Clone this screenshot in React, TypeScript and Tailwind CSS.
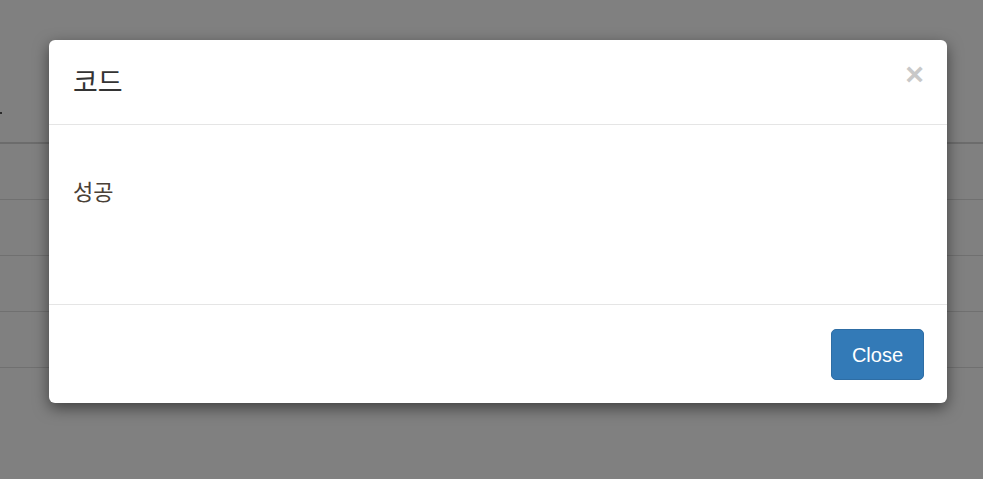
import React from 'react';

const rows = [0, 1, 2, 3];

const App: React.FC = () => {
  return (
    <div className="relative h-[479px] w-full overflow-hidden bg-[#808080] font-['Liberation_Sans','Noto_Sans_CJK_KR',sans-serif]">
      {/* page behind the backdrop */}
      <div className="pt-[104px]">
        <div className="h-[38px] pt-[8px]">
          <span className="ml-[-4px] block h-[2px] w-[6px] bg-[#2a2a2a]" />
        </div>
        <div className="h-[2px] bg-[#6c6c6c]" />
        {rows.map((r) => (
          <div key={r} className="h-[56px] border-b border-[#707070]" />
        ))}
      </div>

      {/* modal */}
      <div className="absolute left-[49px] top-[40px] w-[898px] rounded-[6px] bg-white shadow-[0_5px_15px_rgba(0,0,0,0.5)]">
        <div className="relative flex h-[85px] items-center border-b border-[#e5e5e5] px-[24px] pb-[4px]">
          <h4 className="text-[27px] leading-none text-[#333] font-['Noto_Sans_CJK_KR',sans-serif]">코드</h4>
          <button className="absolute right-[23px] top-[18px] text-[32px] font-bold leading-none text-[#c8c8c8]">
            ×
          </button>
        </div>
        <div className="h-[180px] border-b border-[#e5e5e5] px-[24px] pt-[54px]">
          <p className="text-[22px] leading-none text-[#4a4036] font-['Noto_Sans_CJK_KR',sans-serif]">성공</p>
        </div>
        <div className="flex justify-end px-[23px] pt-[24px] pb-[23px]">
          <button className="h-[51px] w-[93px] rounded-[5px] border border-[#2e6da4] bg-[#337ab7] text-[20px] text-white">
            Close
          </button>
        </div>
      </div>
    </div>
  );
};

export default App;
